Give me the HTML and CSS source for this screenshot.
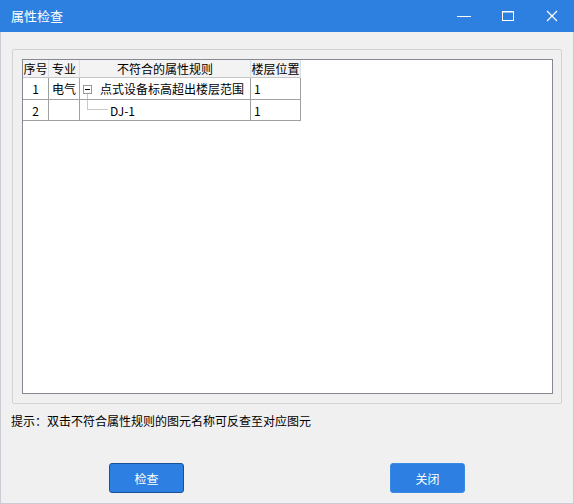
FILE: index.html
```html
<!DOCTYPE html>
<html>
<head>
<meta charset="utf-8">
<link rel="stylesheet" href="styles.css">
</head>
<body>
<div class="window">
  <div class="titlebar">
    <div class="title">属性检查</div>
    <div class="controls">
      <div class="ctl"><svg width="44" height="32" viewBox="0 0 44 32"><line x1="15" y1="16.5" x2="29" y2="16.5" stroke="#fff" stroke-width="1"/></svg></div>
      <div class="ctl"><svg width="44" height="32" viewBox="0 0 44 32"><rect x="16.5" y="11.5" width="11" height="9" fill="none" stroke="#fff" stroke-width="1"/><line x1="16" y1="12" x2="28" y2="12" stroke="#fff" stroke-width="1"/></svg></div>
      <div class="ctl"><svg width="44" height="32" viewBox="0 0 44 32"><path d="M17 11 L27 21 M27 11 L17 21" stroke="#fff" stroke-width="1.2" fill="none"/></svg></div>
    </div>
  </div>
  <div class="content">
    <div class="group">
      <div class="list">
        <div class="grid">
          <div class="hcell">序号</div>
          <div class="hcell">专业</div>
          <div class="hcell">不符合的属性规则</div>
          <div class="hcell">楼层位置</div>

          <div class="cell center">1</div>
          <div class="cell">电气</div>
          <div class="cell tree">
            <div class="toggle"><div class="minus"><span class="bar"></span></div><div class="stem"></div></div>
            <span class="node-text">点式设备标高超出楼层范围</span>
          </div>
          <div class="cell">1</div>

          <div class="cell center">2</div>
          <div class="cell"></div>
          <div class="cell tree">
            <div class="connector"></div>
            <span class="leaf-text">DJ-1</span>
          </div>
          <div class="cell">1</div>
        </div>
      </div>
    </div>
    <div class="hint">提示：双击不符合属性规则的图元名称可反查至对应图元</div>
    <div class="buttons">
      <button class="btn focused">检查</button>
      <button class="btn">关闭</button>
    </div>
  </div>
</div>
</body>
</html>
```

FILE: styles.css
```css
html, body {
  margin: 0;
  padding: 0;
}
body {
  font-family: "Noto Sans CJK SC", "Noto Sans", sans-serif;
  font-size: 12px;
  color: #000;
  width: 574px;
  height: 504px;
  overflow: hidden;
}
.window {
  width: 574px;
  height: 504px;
  box-sizing: border-box;
  background: #f0f0f0;
  border: 1px solid #c9ccd3;
  border-top: none;
  display: flex;
  flex-direction: column;
}
.titlebar {
  height: 32px;
  margin: 0 -1px;
  background: #2d7fe0;
  display: flex;
  align-items: center;
  justify-content: space-between;
  flex-shrink: 0;
}
.title {
  color: #fff;
  font-size: 13px;
  padding-left: 11px;
  line-height: 32px;
}
.controls {
  display: flex;
  height: 32px;
}
.ctl {
  width: 44px;
  height: 32px;
}
.ctl svg {
  display: block;
}
.content {
  flex: 1;
  display: flex;
  flex-direction: column;
}
.group {
  margin: 17px 0 0 11px;
  width: 550px;
  height: 355px;
  box-sizing: border-box;
  border: 1px solid #d3d3d3;
  border-radius: 2px;
  padding: 9px 8px 9px 9px;
}
.list {
  width: 531px;
  height: 335px;
  box-sizing: border-box;
  background: #fff;
  border: 1px solid #868991;
}
.grid {
  display: grid;
  grid-template-columns: 26px 31px 171px 50px;
  grid-template-rows: 18px 22px 21px;
}
.hcell {
  background: #f3f3f3;
  border-right: 1px solid #d8dfe6;
  border-bottom: 1px solid #c6c6c6;
  text-align: center;
  line-height: 17px;
  white-space: nowrap;
  overflow: hidden;
}
.cell {
  border-right: 1px solid #a0a0a0;
  border-bottom: 1px solid #a0a0a0;
  padding-left: 3px;
  display: flex;
  align-items: center;
  white-space: nowrap;
}
.cell.center {
  padding-left: 0;
  justify-content: center;
}
.cell.tree {
  padding-left: 0;
  align-items: stretch;
}
.toggle {
  margin-left: 3px;
  padding-top: 7px;
  display: flex;
  flex-direction: column;
  align-items: center;
  width: 9px;
}
.minus {
  width: 9px;
  height: 9px;
  box-sizing: border-box;
  border: 1px solid #9a9a9a;
  display: flex;
  align-items: center;
  justify-content: center;
  background: #fff;
}
.bar {
  width: 5px;
  height: 1px;
  background: #000;
}
.stem {
  width: 1px;
  flex: 1;
  background: #c8c8c8;
}
.node-text {
  margin-left: 8px;
  align-self: center;
}
.connector {
  margin-left: 7px;
  width: 20px;
  height: 9px;
  border-left: 1px solid #c8c8c8;
  border-bottom: 1px solid #c8c8c8;
}
.leaf-text {
  margin-left: 2px;
  align-self: center;
}
.hint {
  margin: 8px 0 0 10px;
  line-height: 18px;
}
.buttons {
  display: flex;
  margin-top: 33px;
  padding-left: 108px;
  gap: 206px;
}
.btn {
  width: 75px;
  height: 30px;
  box-sizing: border-box;
  background: #2d80e1;
  color: #fff;
  border: 1px solid #3a89e4;
  border-radius: 3px;
  font-family: "Noto Sans CJK SC", "Noto Sans", sans-serif;
  font-size: 12px;
  padding: 0;
}
.btn.focused {
  border-color: #1b4f96;
}
```
